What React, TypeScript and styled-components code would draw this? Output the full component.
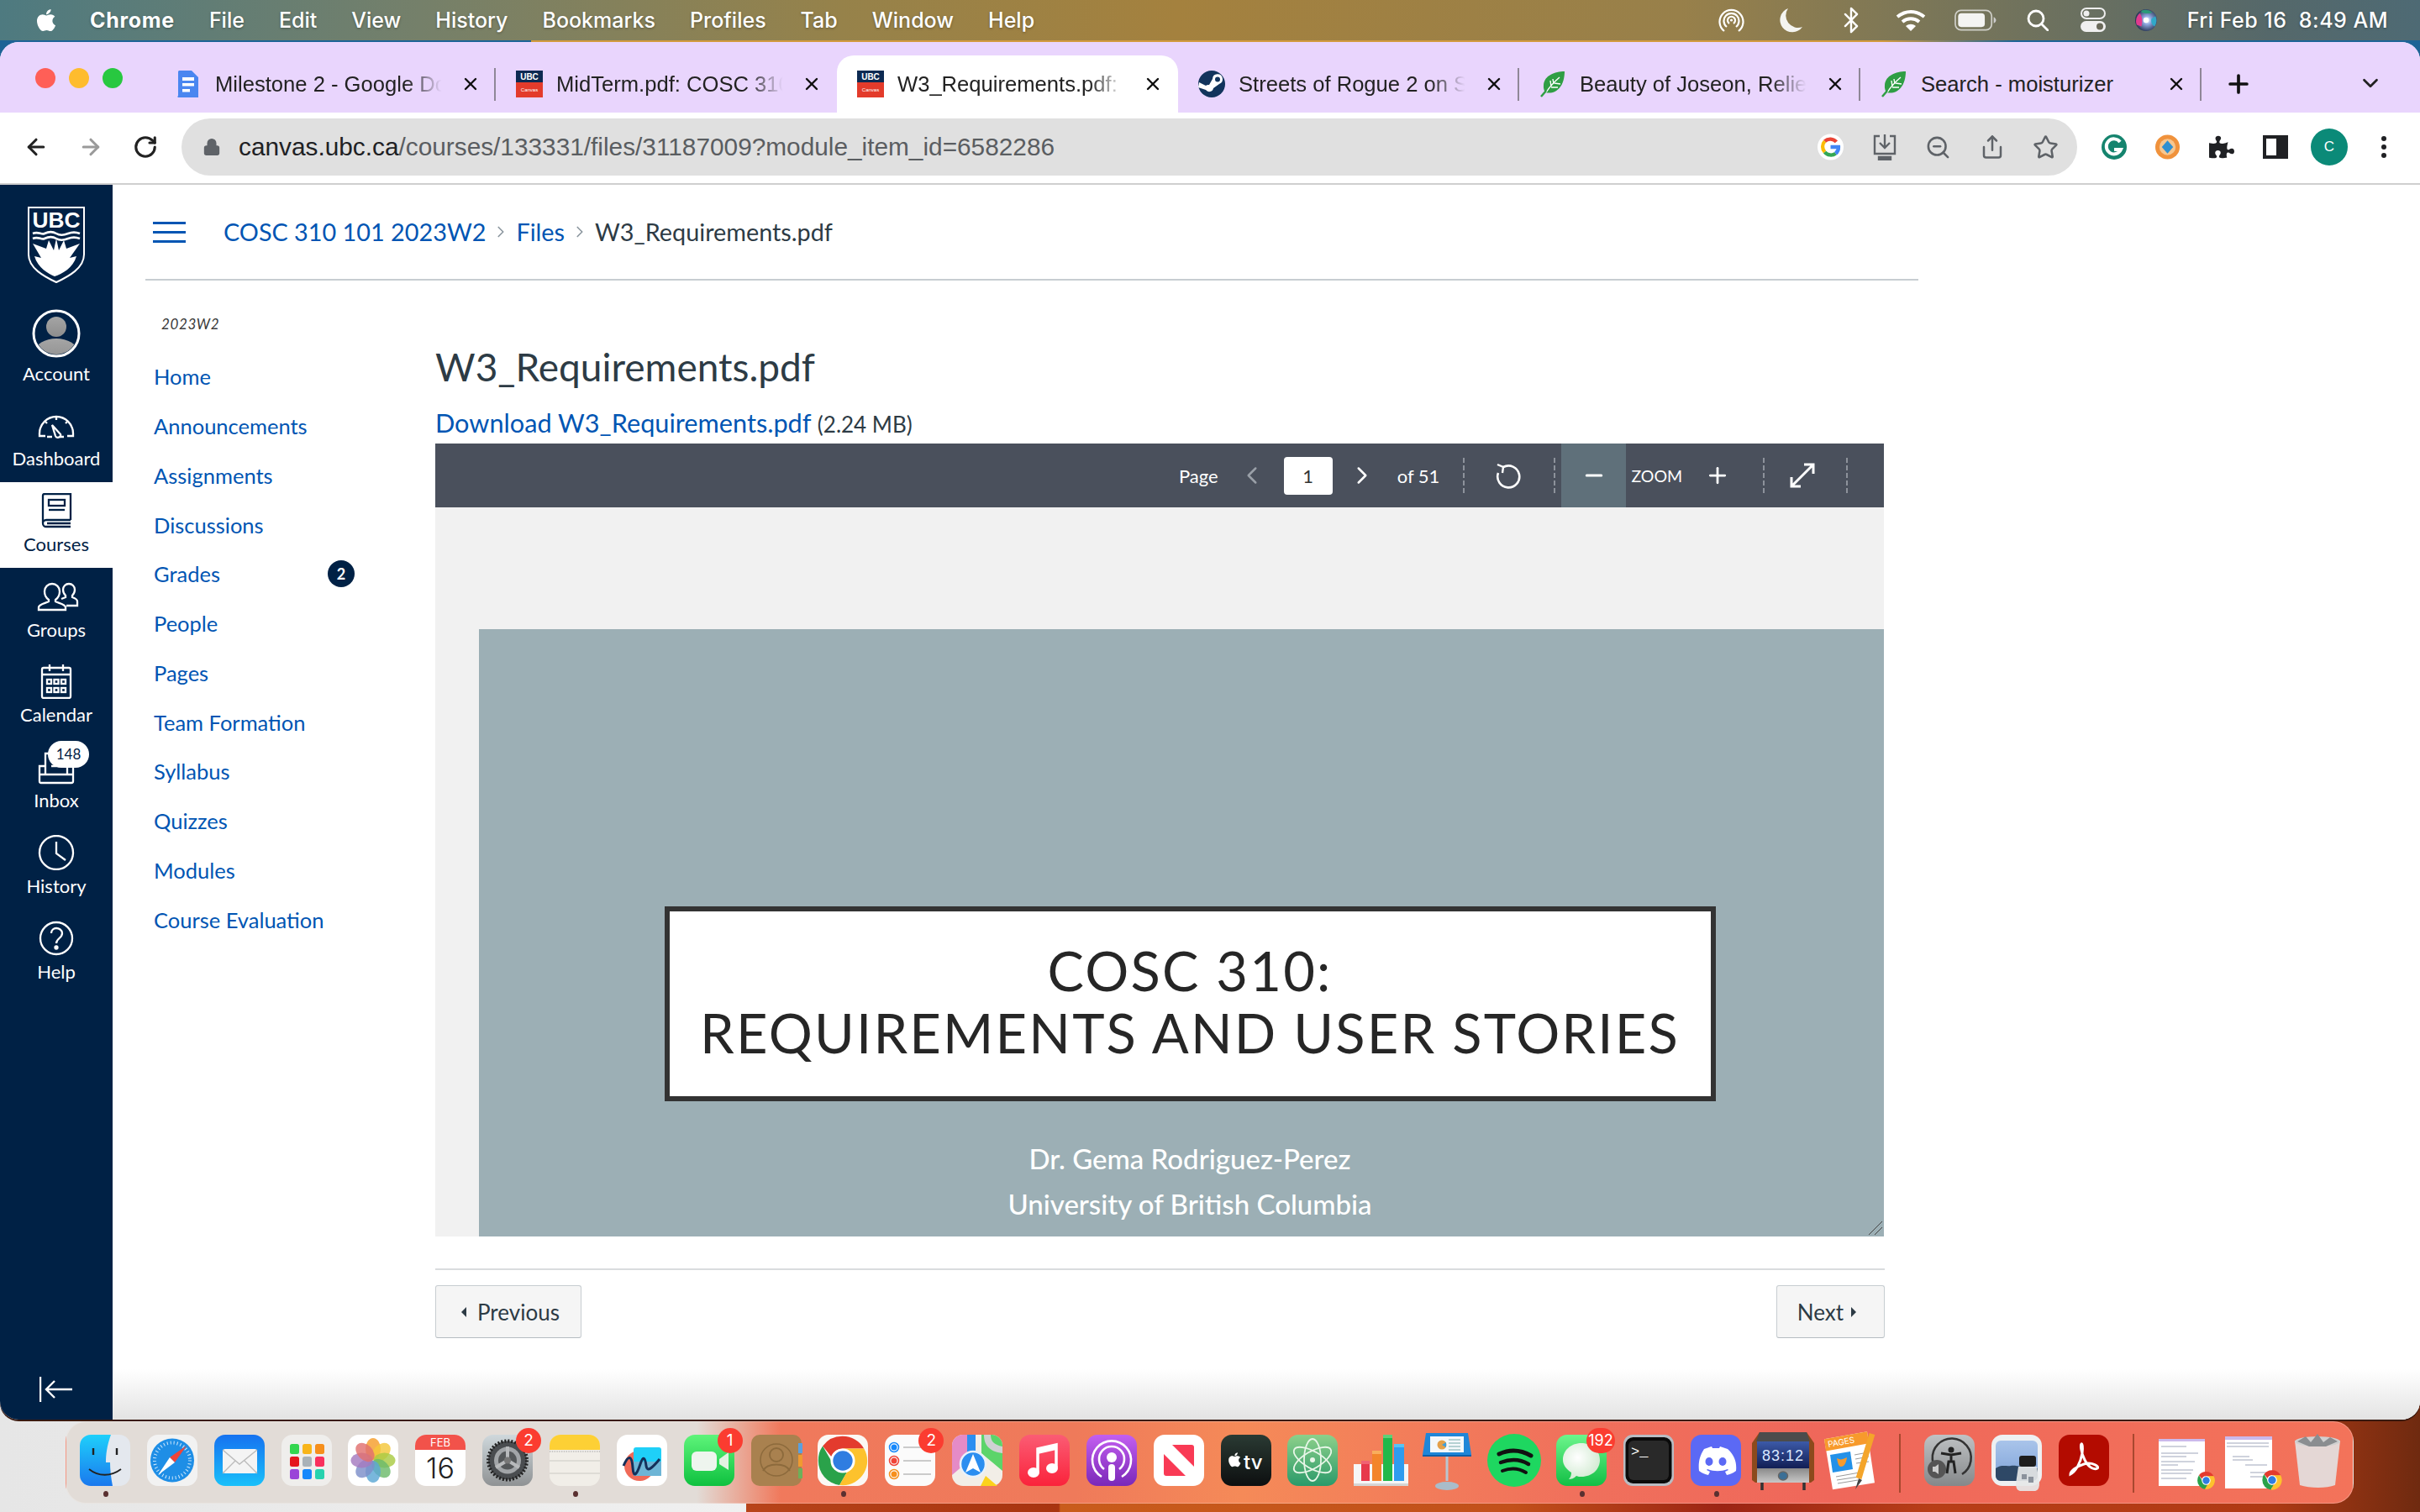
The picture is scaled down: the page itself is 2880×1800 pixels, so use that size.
import React from "react";
import styled, { createGlobalStyle } from "styled-components";
import { ArrowLeft, ArrowRight, RotateCw, Lock, ZoomOut, Share, Star, X, Plus, ChevronDown, ChevronLeft, ChevronRight, Minus, Bluetooth } from "lucide-react";
import { FaApple, FaPuzzlePiece } from "react-icons/fa";

const Global = createGlobalStyle`
  html, body { margin: 0; padding: 0; width: 2880px; height: 1800px; overflow: hidden; }
  #root { width: 2880px; height: 1800px; }
  * { box-sizing: border-box; }
`;

const Page = styled.div`
  width: 2880px; height: 1800px; display: flex; flex-direction: column; overflow: hidden;
  background:
    linear-gradient(90deg, #1d6396 0, #1d6396 632px, #d29a3e 632px, #d29a3e 2240px, #1d6396 2400px) top / 100% 120px no-repeat,
    linear-gradient(90deg, #e6e6e6 0, #f0f0f0 888px, #b8441a 888px, #a83410 1260px, #c95c1c 1262px, #c2501a 1800px, #9c2414 2050px, #b83e18 2300px, #b03a14 2700px, #6f2a10 2880px);
`;
const MenuBar = styled.header`
  height: 48px; margin-bottom: 2px; flex: none; display: flex; align-items: center; padding: 0 38px 0 40px; color: #fff;
  font: 500 25px Inter, "Liberation Sans", sans-serif; text-shadow: 0 1px 3px rgba(0,0,0,.35);
  background: linear-gradient(90deg, #4e7a80 0, #75806a 500px, #96824a 1000px, #a4813e 1400px, #98804a 2000px, #7a7658 2300px, #55686a 2700px, #4e6a74 2880px);
`;
const AppleMark = styled.span` width: 30px; margin-right: 37px; display: flex; font-size: 30px; `;
const MenuItems = styled.nav` display: flex; gap: 41px; `;
const MenuItem = styled.span<{ $bold?: boolean }>` font-weight: ${p => (p.$bold ? 700 : 500)}; letter-spacing: ${p => (p.$bold ? ".7px" : "0")}; `;
const StatusArea = styled.div` margin-left: auto; display: flex; align-items: center; gap: 33px; `;
const StatusSlot = styled.span<{ $w: number }>` width: ${p => p.$w}px; height: 40px; display: flex; align-items: center; justify-content: center; flex: none; `;
const Clock = styled.span` margin-left: 3px; letter-spacing: .5px; white-space: pre; `;

const Win = styled.div`
  height: 1640px; flex: none; border-radius: 22px; overflow: hidden; display: flex; flex-direction: column; background: #fff;
  box-shadow: 0 2px 0 #3a1a10;
`;
const TabStrip = styled.div` height: 84px; flex: none; background: #e9d5fd; display: flex; align-items: flex-end; `;
const Lights = styled.div` width: 184px; height: 84px; flex: none; padding: 31px 0 0 42px; display: flex; gap: 16px; `;
const Light = styled.i<{ $c: string }>` width: 24px; height: 24px; border-radius: 50%; background: ${p => p.$c}; `;
const Tab = styled.div<{ $active?: boolean; $sep?: boolean }>`
  width: 406px; height: 68px; flex: none; position: relative; display: flex; align-items: center; padding: 0 18px 0 24px; gap: 16px;
  border-radius: 20px 20px 0 0; background: ${p => (p.$active ? "#fff" : "transparent")};
  font: 400 25.6px "Liberation Sans", Arial, sans-serif; color: #222;
  &::after { content: ""; display: ${p => (p.$sep ? "block" : "none")}; position: absolute; right: 0; top: 15px; height: 39px; width: 2px; background: #8f8797; }
`;
const TabTitle = styled.span<{ $plain?: boolean }>`
  width: 278px; white-space: nowrap; overflow: hidden; flex: none;
  ${p => (p.$plain ? "" : "-webkit-mask-image: linear-gradient(90deg,#000 82%,transparent 97%); mask-image: linear-gradient(90deg,#000 82%,transparent 97%);")}
`;
const TabClose = styled.span` width: 28px; margin-left: -3px; display: flex; justify-content: center; color: #111; `;
const NewTab = styled.span` margin: 0 0 17px 27px; display: flex; color: #111; `;
const TabMenu = styled.span` margin-left: auto; margin-right: 44px; margin-bottom: 20px; display: flex; color: #222; `;
const Favicon = styled.svg` width: 32px; height: 32px; flex: none; `;

const Toolbar = styled.div`
  height: 86px; flex: none; display: flex; align-items: center; padding: 0 30px 2px 28px; background: #fff; border-bottom: 2px solid #cfcfcf;
`;
const NavButtons = styled.div` display: flex; gap: 35px; width: 188px; flex: none; color: #222; `;
const NavBtn = styled.span<{ $dim?: boolean }>` display: flex; width: 30px; color: ${p => (p.$dim ? "#9a9a9a" : "#222")}; `;
const Omnibox = styled.div`
  width: 2256px; height: 68px; flex: none; border-radius: 34px; background: #e0e0e0; display: flex; align-items: center; padding: 0 22px 0 25px;
`;
const Url = styled.span` margin-left: 21px; font: 400 29.8px "Liberation Sans", Arial, sans-serif; color: #5a5d61; white-space: nowrap; `;
const Host = styled.span` color: #202124; `;
const ActionRow = styled.div<{ $out?: boolean }>` display: flex; gap: 33px; align-items: center; color: #5f6368; margin-left: ${p => (p.$out ? "28px" : "auto")}; `;
const ActionSlot = styled.span` width: 31px; height: 44px; display: flex; align-items: center; justify-content: center; `;
const Avatar = styled.span` width: 44px; height: 44px; flex: none; border-radius: 50%; background: #0b8a78; color: #fff; font: 400 17px "Liberation Sans", sans-serif; display: flex; align-items: center; justify-content: center; margin: 0 -6px; `;

const Body = styled.div` flex: 1; min-height: 0; display: flex; `;
const Side = styled.aside` width: 134px; flex: none; background: #002145; display: flex; flex-direction: column; `;
const LogoBox = styled.div` height: 151px; flex: none; padding: 26px 0 0 33px; `;
const SideItem = styled.div<{ $on?: boolean }>`
  height: 101.7px; flex: none; display: flex; flex-direction: column; align-items: center; justify-content: flex-end; padding-bottom: 15px; position: relative;
  background: ${p => (p.$on ? "#fff" : "transparent")}; color: ${p => (p.$on ? "#002145" : "#fff")};
`;
const SideIcon = styled.svg<{ $h?: number }>` width: 60px; height: ${p => p.$h || 42}px; margin-bottom: 6px; flex: none; fill: none; stroke: currentColor; stroke-width: 2.3; `;
const SideLabel = styled.span` font: 400 22px/26px Lato, sans-serif; `;
const InboxBadge = styled.span` position: absolute; left: 57px; top: 3px; width: 49px; height: 32px; border-radius: 16px; background: #fff; color: #002145; font: 400 17px/32px Lato, sans-serif; text-align: center; `;
const Collapse = styled.svg` margin: auto 0 21px 47px; width: 40px; height: 30px; flex: none; fill: none; stroke: #fff; stroke-width: 2.4; `;

const Main = styled.main`
  flex: 1; min-width: 0; position: relative; overflow: hidden; background: #fff;
  &::after { content: ""; position: absolute; left: 0; right: 0; bottom: 0; height: 60px; background: linear-gradient(180deg, rgba(220,220,220,0), rgba(222,222,222,.85)); }
`;
const Crumbs = styled.div`
  width: 2110px; height: 114px; margin-left: 39px; display: flex; align-items: center; padding: 0 0 0 9px; border-bottom: 2px solid #c7cdd1;
  font: 400 28.8px Lato, sans-serif; color: #0055b3;
`;
const Burger = styled.span`
  width: 39px; height: 25px; margin-right: 45px; border-top: 3px solid #0055b3; border-bottom: 3px solid #0055b3; position: relative; display: block;
  &::after { content: ""; position: absolute; left: 0; right: 0; top: 8px; height: 3px; background: #0055b3; }
`;
const CrumbSep = styled.span` display: flex; margin: 0 7px; color: #8b969e; `;
const CrumbNow = styled.span` color: #2d3b45; `;
const Columns = styled.div` display: flex; `;
const CourseNav = styled.nav` width: 335px; margin-left: 49px; flex: none; padding-top: 42px; `;
const Term = styled.div` margin: 0 0 23px 9px; font: italic 400 17px/20px Lato, sans-serif; letter-spacing: .6px; color: #3a3a3a; `;
const NavRow = styled.a` height: 58.75px; width: 239px; display: flex; align-items: center; justify-content: space-between; font: 400 25.5px Lato, sans-serif; color: #0055b3; `;
const NavBadge = styled.span` width: 32px; height: 32px; border-radius: 50%; background: #002145; color: #fff; font: 700 18px/32px Lato, sans-serif; text-align: center; `;
const Content = styled.section` width: 1725px; flex: none; padding-top: 78px; `;
const Title = styled.h1` margin: 0 0 26px; font: 400 46px/50px Lato, sans-serif; color: #2d3b45; `;
const DownloadRow = styled.div` height: 40px; font: 400 30.7px/32px Lato, sans-serif; color: #0055b3; `;
const Size = styled.small` font-size: 26px; color: #2d3b45; `;
const PdfBar = styled.div`
  height: 76px; width: 1724px; background: #4a505c; display: flex; align-items: center; color: #fff; padding-left: 885px;
  font: 400 22px Lato, sans-serif;
`;
const PdfText = styled.span<{ $ml?: number; $small?: boolean }>` margin-left: ${p => p.$ml || 0}px; font-size: ${p => (p.$small ? "19.5px" : "22px")}; white-space: nowrap; `;
const PdfInput = styled.span` width: 58px; height: 45px; margin-left: 21px; border-radius: 4px; background: #fff; color: #333; font-size: 22px; display: flex; align-items: center; justify-content: center; `;
const PdfBtn = styled.span<{ $on?: boolean; $dim?: boolean; $ml?: number }>`
  display: flex; align-items: center; justify-content: center; height: 76px; flex: none; margin-left: ${p => p.$ml || 0}px;
  color: ${p => (p.$dim ? "#9aa0a8" : "#fff")}; background: ${p => (p.$on ? "#5f707a" : "transparent")}; width: ${p => (p.$on ? "77px" : "auto")};
`;
const PdfSep = styled.i<{ $ml: number }>` width: 0; height: 42px; border-left: 2px dashed #8d929b; margin-left: ${p => p.$ml}px; flex: none; `;
const Viewer = styled.div` height: 868px; width: 1724px; background: #f1f1f1; padding: 145px 0 0 52px; overflow: hidden; position: relative; `;
const Slide = styled.div` width: 1692px; height: 800px; background: #9cafb5; padding-top: 330px; display: flex; flex-direction: column; align-items: center; `;
const SlideBox = styled.div`
  width: 1251px; height: 232px; padding-bottom: 6px; background: #fff; border: 6px solid #333; display: flex; flex-direction: column; align-items: center; justify-content: center;
  font: 400 65px/74px Lato, sans-serif; color: #262626; letter-spacing: 2.2px; white-space: nowrap;
`;
const Byline = styled.div` margin-top: 41px; font: 500 33px/54px Lato, sans-serif; color: #fff; text-align: center; `;
const Grip = styled.svg` position: absolute; right: 1px; bottom: 1px; width: 20px; height: 20px; stroke: #444; fill: none; `;
const Pager = styled.div` width: 1725px; margin-top: 38px; padding-top: 18px; border-top: 2px solid #d9dcde; display: flex; justify-content: space-between; `;
const PagerBtn = styled.span<{ $next?: boolean }>`
  height: 63px; display: flex; align-items: center; gap: ${p => (p.$next ? "9px" : "13px")}; padding: ${p => (p.$next ? "0 33px 0 24px" : "0 25px 0 30px")};
  background: #f5f5f5; border: 1px solid #c7cdd1; border-bottom-color: #b5bcc1; border-radius: 3px;
  font: 400 26px Lato, sans-serif; color: #2d3b45;
`;
const Caret = styled.i<{ $r?: boolean }>` width: 0; height: 0; border-top: 6px solid transparent; border-bottom: 6px solid transparent; ${p => (p.$r ? "border-left: 6px solid #2d3b45;" : "border-right: 6px solid #2d3b45;")} `;

const Dock = styled.footer`
  width: 2723px; height: 98px; margin: 2px 0 0 78px; flex: none; padding: 15px 0 0 16px; display: flex; gap: 19.87px; align-items: flex-start;
  border-radius: 24px; border: 1px solid rgba(255,255,255,.25);
  background: linear-gradient(90deg, #e2dcd7 0, #e2dcd7 750px, #f0795c 850px, #ef7a5a 1200px, #f58a58 1400px, #f0705c 1800px, #ef675a 2100px, #f3735a 2723px);
`;
const Slot = styled.div` width: 60px; height: 61px; flex: none; position: relative; `;
const DockArt = styled.svg` width: 60px; height: 61px; display: block; overflow: visible; `;
const DockBadge = styled.span<{ $wide?: boolean }>`
  position: absolute; top: -8px; right: -10px; min-width: ${p => (p.$wide ? "34px" : "30px")}; height: 30px; border-radius: 15px; background: #fb3c30; color: #fff;
  font: 400 ${p => (p.$wide ? "18px" : "19px")}/30px Inter, sans-serif; text-align: center;
`;
const RunDot = styled.i` position: absolute; left: 28px; top: 67px; width: 6px; height: 7px; border-radius: 50%; background: #5a3030; `;
const DockRule = styled.div` width: 19px; height: 70px; flex: none; margin-top: -1px; display: flex; justify-content: center; &::before { content: ""; width: 2px; background: #a8482f; } `;

const Docs = () => (<Favicon viewBox="0 0 32 32"><path d="M5 0h15l8 8v24H5a1 1 0 0 1-1-2V2a2 2 0 0 1 1-2z" fill="#4a86f0"/><rect x="9" y="8" width="14" height="4" fill="#fff"/><rect x="9" y="15" width="14" height="3.5" fill="#fff"/><rect x="9" y="22" width="9" height="3.5" fill="#fff"/></Favicon>);
const UbcFav = () => (<Favicon viewBox="0 0 32 32"><rect width="32" height="14" fill="#0d2a52"/><rect y="14" width="32" height="18" fill="#e33b2b"/><text x="16" y="11" textAnchor="middle" fill="#fff" fontSize="10" fontWeight="700" fontFamily="Liberation Sans">UBC</text><text x="16" y="25" textAnchor="middle" fill="#fff" fontSize="6" fontFamily="Liberation Sans">Canvas</text></Favicon>);
const Steam = () => (<Favicon viewBox="0 0 32 32"><circle cx="16" cy="16" r="16" fill="#12345c"/><path d="M0 20l9 3a5 5 0 0 0 9-2l7-5a6 6 0 1 0-8-6l-4 7a5 5 0 0 0-4 1L1 14z" fill="#fff"/><circle cx="23" cy="10.5" r="3" fill="#12345c"/></Favicon>);
const Leaf = () => (<Favicon viewBox="0 0 32 32"><path d="M30 1C18 1 6 6 5 17c-.4 4 .6 7 2 9 12 3 23-6 23-25z" fill="#2f9e44"/><path d="M8 26C13 18 17 14 24 8M14 19l-1-7M17 16l-1-6M14 20l8 0M18 15l7 1" stroke="#fff" strokeWidth="1.4" fill="none"/><path d="M2 31l6-7" stroke="#2f9e44" strokeWidth="2.5"/></Favicon>);
const GoogleG = () => (<svg width="36" height="36" viewBox="0 0 36 36"><circle cx="18" cy="18" r="18" fill="#fff"/><g fill="none" strokeWidth="5"><path d="M26 11a11 11 0 0 0-16-1" stroke="#ea4335"/><path d="M10 10a11 11 0 0 0 0 15" stroke="#fbbc05"/><path d="M10 25a11 11 0 0 0 15 2" stroke="#34a853"/><path d="M25 27a11 11 0 0 0 4-9H18" stroke="#4285f4"/></g></svg>);
const ChromeLogo = ({ x = 0, y = 0, s = 48 }: { x?: number; y?: number; s?: number }) => (
  <svg x={x} y={y} width={s} height={s} viewBox="0 0 48 48" overflow="visible">
    <path d="M24 4a20 20 0 0 1 17.3 10H24a10 10 0 0 0-9.4 6.6L7.6 12A20 20 0 0 1 24 4z" fill="#e33b2e"/>
    <path d="M4 24a20 20 0 0 1 3.6-12l8.7 15a10 10 0 0 0 11 6.5l-6 10.3A20 20 0 0 1 4 24z" fill="#2aa24a"/>
    <path d="M24 14h17.3A20 20 0 0 1 24 44l-2.7-.2 8.7-15A10 10 0 0 0 24 14z" fill="#fdc22d"/>
    <circle cx="24" cy="24" r="10" fill="#fff"/><circle cx="24" cy="24" r="8" fill="#2f7de1"/>
  </svg>
);

type SQ = { f: string; r?: number };
const Sq = ({ f, r = 13 }: SQ) => <rect width="60" height="61" rx={r} fill={f} />;

const art: Record<string, React.ReactNode> = {
  finder: (<><defs><linearGradient id="fd" x1="0" y1="0" x2="0" y2="1"><stop offset="0" stopColor="#1fd0fb"/><stop offset="1" stopColor="#1a78ee"/></linearGradient></defs><Sq f="#e4e8ee"/><path d="M13 0h24c-5 14-6 24-6 33h5c0 8 1 18 3 28H13A13 13 0 0 1 0 48V13A13 13 0 0 1 13 0z" fill="url(#fd)"/><path d="M16 16v8M44 16v8" stroke="#222" strokeWidth="2.4"/><path d="M11 41c11 9 26 9 38 0" stroke="#222" strokeWidth="1.8" fill="none"/></>),
  safari: (<><Sq f="#f2f2f2"/><circle cx="30" cy="30.5" r="26" fill="#1e8ee6"/><circle cx="30" cy="30.5" r="21" fill="none" stroke="#cfe8fb" strokeWidth="4" strokeDasharray="1 3"/><path d="M47 13L27 27l6 6z" fill="#f04438"/><path d="M13 48l14-21 6 6z" fill="#fff"/></>),
  mail: (<><defs><linearGradient id="ml" x1="0" y1="0" x2="0" y2="1"><stop offset="0" stopColor="#1672f0"/><stop offset="1" stopColor="#19c0fa"/></linearGradient></defs><Sq f="url(#ml)"/><rect x="10" y="17" width="41" height="29" rx="3" fill="#f4f4f4"/><path d="M10 18l20 17 21-17M10 46l15-15M51 46L36 31" fill="none" stroke="#bbb" strokeWidth="1.4"/></>),
  launch: (<><Sq f="#efeeec"/>{[["#33d64f","#f8b51a","#f68f1c"],["#e5161d","#a9b2b8","#f9305d"],["#9a44d8","#1688fb","#26d2ae"]].map((row,i)=>row.map((c,j)=><rect key={i+"-"+j} x={10+j*15} y={11+i*15} width="11" height="12" rx="2.5" fill={c}/>))}</>),
  photos: (<><Sq f="#fff"/>{["#f59e2b","#f4c73a","#a9cb43","#6dbb6b","#5ba7d4","#7d8fc9","#a57ac0","#e0706f"].map((c,i)=><ellipse key={c} cx="30" cy="17" rx="9" ry="13" fill={c} opacity=".82" transform={`rotate(${i*45} 30 30.5)`}/>)}</>),
  calendar: (<><Sq f="#fff"/><path d="M13 0h34a13 13 0 0 1 13 13v5H0v-5A13 13 0 0 1 13 0z" fill="#f2524a"/><text x="30" y="14" textAnchor="middle" fontSize="13" fill="#fff" fontFamily="Inter">FEB</text><text x="30" y="52" textAnchor="middle" fontSize="34" fill="#222" fontFamily="Inter" fontWeight="300">16</text></>),
  prefs: (<><defs><linearGradient id="pf" x1="0" y1="0" x2="0" y2="1"><stop offset="0" stopColor="#cfd8dc"/><stop offset="1" stopColor="#8f9294"/></linearGradient></defs><Sq f="url(#pf)"/><circle cx="30" cy="30.5" r="23" fill="#4a4d50"/><circle cx="30" cy="30.5" r="23" fill="none" stroke="#222" strokeWidth="4" strokeDasharray="2 2"/><circle cx="30" cy="30.5" r="16" fill="#a2a5a8"/><circle cx="30" cy="30.5" r="11" fill="#55585a"/><path d="M30 30.5V14M30 30.5L44 39M30 30.5L16 39" stroke="#b8babc" strokeWidth="4"/><circle cx="30" cy="30.5" r="4" fill="#777"/></>),
  notes: (<><Sq f="#f1eee8"/><path d="M13 0h34a13 13 0 0 1 13 13v5H0v-5A13 13 0 0 1 13 0z" fill="#fdd035"/><path d="M0 20h60" stroke="#bbb" strokeWidth="1.4" strokeDasharray="1.4 1.4"/><path d="M0 31h60M0 46h60" stroke="#d8d6d0" strokeWidth="1.5"/></>),
  freeform: (<><Sq f="#fff"/><circle cx="27" cy="37" r="18" fill="#f06a58"/><rect x="20" y="15" width="33" height="34" rx="3" fill="#1fd0f8"/><rect x="20" y="32" width="33" height="17" fill="#6db5d6"/><path d="M8 37c6-14 10-12 11 2s5 8 9-4 6-6 7 2 7 3 16-8" fill="none" stroke="#14305a" strokeWidth="3"/></>),
  facetime: (<><defs><linearGradient id="ft" x1="0" y1="0" x2="0" y2="1"><stop offset="0" stopColor="#5ef47a"/><stop offset="1" stopColor="#0ec13f"/></linearGradient></defs><Sq f="url(#ft)"/><rect x="9" y="20" width="30" height="23" rx="6" fill="#eef5ee"/><path d="M42 29l11-8v21l-11-7z" fill="#e2f2e2"/></>),
  contacts: (<><rect width="60" height="61" rx="10" fill="#a9814f"/><rect x="56" y="10" width="5" height="12" fill="#5aa0e0"/><rect x="56" y="24" width="5" height="14" fill="#f09a30"/><rect x="56" y="40" width="5" height="12" fill="#6db05a"/><circle cx="30" cy="30" r="19" fill="none" stroke="#8c6a3c" strokeWidth="1.5"/><circle cx="30" cy="24" r="8" fill="none" stroke="#8c6a3c" strokeWidth="1.8"/><path d="M14 43c5-10 27-10 32 0" fill="none" stroke="#8c6a3c" strokeWidth="1.8"/></>),
  chrome: (<><Sq f="#fbf8f4"/><ChromeLogo x={-5} y={-4} s={70}/></>),
  remind: (<><Sq f="#fbfbfb"/>{[["#1688fb",15],["#f04438",31],["#f68f1c",47]].map(([c,y])=>(<g key={c as string}><circle cx="11" cy={y as number} r="5.5" fill="none" stroke={c as string} strokeWidth="1.5"/><circle cx="11" cy={y as number} r="3.5" fill={c as string}/><path d={`M22 ${y}h33`} stroke="#bbb" strokeWidth="1.5"/></g>))}</>),
  maps: (<><Sq f="#f2eee7"/><path d="M0 13A13 13 0 0 1 13 0h8v30L0 48z" fill="#e58bc6"/><path d="M35 0h12a13 13 0 0 1 13 13v30L35 22z" fill="#5cd46a"/><path d="M18 0h10v28H18z" fill="#2b8ef0"/><path d="M38 0c0 12 6 20 22 22v-8C50 12 46 8 46 0z" fill="#cfd1d2"/><path d="M34 61l6-12 14 12z" fill="#fcd21c"/><circle cx="25" cy="35" r="15" fill="#2b8ef0" stroke="#e8f2fb" strokeWidth="2.5"/><path d="M25 23l9 22-9-5-9 5z" fill="#fff"/></>),
  music: (<><defs><linearGradient id="mu" x1="0" y1="0" x2="0" y2="1"><stop offset="0" stopColor="#fb5c74"/><stop offset="1" stopColor="#fa233b"/></linearGradient></defs><Sq f="url(#mu)"/><path d="M22 44V17l22-5v27" fill="none" stroke="#fff" strokeWidth="3.5"/><ellipse cx="17" cy="45" rx="7" ry="6" fill="#fff"/><ellipse cx="39" cy="40" rx="7" ry="6" fill="#fff"/><path d="M22 17l22-5v6l-22 5z" fill="#fff"/></>),
  podcast: (<><defs><linearGradient id="pc" x1="0" y1="0" x2="0" y2="1"><stop offset="0" stopColor="#c35ff0"/><stop offset="1" stopColor="#7a28b8"/></linearGradient></defs><Sq f="url(#pc)"/><g fill="none" stroke="#fff" strokeWidth="2.6"><path d="M18 50a23 23 0 1 1 24 0"/><path d="M21 41a15 15 0 1 1 18 0"/></g><circle cx="30" cy="27" r="6" fill="#fff"/><rect x="26" y="35" width="8" height="20" rx="4" fill="#fff"/></>),
  news: (<><Sq f="#fff"/><rect x="12" y="12" width="36" height="37" rx="3" fill="#f93a55"/><path d="M12 12h10l26 26v11H38L12 23z" fill="#fff"/></>),
  tv: (<><defs><linearGradient id="tv" x1="0" y1="0" x2="0" y2="1"><stop offset="0" stopColor="#2a3a33"/><stop offset="1" stopColor="#0d0f10"/></linearGradient></defs><Sq f="url(#tv)"/><g transform="translate(9 20) scale(.038)"><path fill="#fff" d="M318.7 268.7c-.2-36.7 16.4-64.4 50-84.8-18.8-26.9-47.2-41.7-84.7-44.6-35.5-2.8-74.3 20.7-88.5 20.7-15 0-49.4-19.7-76.4-19.7C63.3 141.2 4 184.8 4 273.5q0 39.3 14.4 81.2c12.8 36.7 59 126.7 107.2 125.2 25.2-.6 43-17.9 75.8-17.9 31.8 0 48.3 17.9 76.4 17.9 48.6-.7 90.4-82.5 102.6-119.3-65.2-30.7-61.7-90-61.7-91.9zm-56.6-164.2c27.3-32.4 24.8-61.9 24-72.5-24.1 1.4-52 16.4-67.9 34.9-17.5 19.8-27.8 44.3-25.6 71.9 26.1 2 49.9-11.4 69.5-34.3z"/></g><text x="27" y="41" fontSize="24" fill="#fff" fontFamily="Inter" fontWeight="500">tv</text></>),
  atom: (<><defs><linearGradient id="at" x1="0" y1="0" x2="0" y2="1"><stop offset="0" stopColor="#8dd08a"/><stop offset="1" stopColor="#2a9a6a"/></linearGradient></defs><Sq f="url(#at)"/><g fill="none" stroke="#e8f6e8" strokeWidth="1.8"><ellipse cx="30" cy="30" rx="25" ry="10" transform="rotate(30 30 30)"/><ellipse cx="30" cy="30" rx="25" ry="10" transform="rotate(-30 30 30)"/><ellipse cx="30" cy="30" rx="25" ry="10" transform="rotate(90 30 30)"/></g><circle cx="30" cy="30" r="3" fill="#e8f6e8"/></>),
  numbers: (<><path d="M-1 35h65v26H-1z" fill="#f6f6f6"/><path d="M-1 58h65v3H-1z" fill="#d5d5d5"/><rect x="8" y="34" width="10" height="21" fill="#e7394b"/><rect x="8" y="31" width="10" height="4" fill="#f06272"/><rect x="21" y="22" width="11" height="33" fill="#f3852b"/><rect x="21" y="19" width="11" height="4" fill="#f9ae5c"/><rect x="34" y="3" width="11" height="52" fill="#21b84a"/><rect x="34" y="0" width="11" height="4" fill="#60d078"/><rect x="47" y="14" width="12" height="41" fill="#2f9cee"/><rect x="47" y="11" width="12" height="4" fill="#56c4f4"/></>),
  keynote: (<><path d="M5-2h50l4 26H1z" fill="#1f86d8"/><rect x="10" y="2" width="40" height="19" fill="#f4f8fb"/><path d="M1 24h58v2H1z" fill="#0f5fa8"/><circle cx="24" cy="12" r="5.5" fill="#e4a04a"/><path d="M24 12l5-3v6z" fill="#3a9fe0"/><path d="M32 6h14M32 10h14M32 14h14M32 18h14" stroke="#7aa" strokeWidth="1"/><rect x="28.5" y="26" width="3" height="29" fill="#b9c6d0"/><ellipse cx="30" cy="61" rx="14" ry="5" fill="#a9bcca"/></>),
  spotify: (<><ellipse cx="30" cy="30.5" rx="32" ry="31.5" fill="#1ed760"/><g fill="none" stroke="#111" strokeLinecap="round"><path d="M12 23c13-6 26-5 38 2" strokeWidth="5"/><path d="M14 33c11-4 23-4 33 2" strokeWidth="4.5"/><path d="M16 43c10-4 20-3 28 2" strokeWidth="4"/></g></>),
  messages: (<><defs><linearGradient id="ms" x1="0" y1="0" x2="0" y2="1"><stop offset="0" stopColor="#6cf58c"/><stop offset="1" stopColor="#12bf45"/></linearGradient><radialGradient id="mb" cx=".4" cy=".4" r=".7"><stop offset="0" stopColor="#fff"/><stop offset="1" stopColor="#cde8cd"/></radialGradient></defs><Sq f="url(#ms)"/><path d="M30 10c13 0 22 9 22 20S43 50 30 50c-2 0-4 0-6-1-3 3-6 4-9 4 2-2 3-5 3-8-6-4-10-9-10-15 0-11 9-20 22-20z" fill="url(#mb)"/></>),
  terminal: (<><rect width="60" height="61" rx="11" fill="#b8bcc2"/><rect x="2.5" y="3" width="55" height="55" rx="9" fill="#0a0a0a"/><rect x="6" y="7" width="48" height="47" rx="6" fill="#292929"/><text x="9" y="25" fontSize="17" fill="#fff" fontFamily="Liberation Mono">&gt;_</text></>),
  discord: (<><Sq f="#5b69f5"/><path d="M44 17c-3-1-6-2-9-3l-1 2c-3 0-6 0-8 0l-1-2c-3 1-6 2-9 3-6 9-7 18-6 26 4 3 7 4 11 5l2-4-4-2 1-1c8 3 16 3 24 0l1 1-4 2 2 4c4-1 7-2 11-5 1-9-1-18-10-26z" fill="#fff"/><ellipse cx="22" cy="32" rx="4.5" ry="5" fill="#5b69f5"/><ellipse cx="38" cy="32" rx="4.5" ry="5" fill="#5b69f5"/></>),
  clock: (<><defs><linearGradient id="cs" x1="0" y1="0" x2="0" y2="1"><stop offset="0" stopColor="#3c5aa8"/><stop offset="1" stopColor="#101c52"/></linearGradient><linearGradient id="cb" x1="0" y1="0" x2="0" y2="1"><stop offset="0" stopColor="#8a8a8a"/><stop offset="1" stopColor="#c8c8c8"/></linearGradient></defs><path d="M-6 10L3-3h56l9 13v44l-4 3H-2l-4-3z" fill="#8c4a1c"/><path d="M3-3h56l4 11H-1z" fill="#4c4c4c"/><rect x="0" y="8" width="62" height="33" fill="url(#cs)"/><rect x="0" y="40" width="62" height="17" fill="url(#cb)"/><text x="31" y="31" textAnchor="middle" fontSize="18" letterSpacing="1" fill="#dbe7ff" fontFamily="Liberation Sans">83:12</text><ellipse cx="31" cy="49" rx="5.5" ry="5" fill="#3b6f96" stroke="#666" strokeWidth="1.5"/><path d="M6 57v9M56 57v9" stroke="#333" strokeWidth="3.5"/></>),
  pages: (<><path d="M0 5.3L51-3.7l9 61L10 65.3z" fill="#fff"/><path d="M0 5.3L51-3.7l2.2 14L2 19.5z" fill="#f79a2c"/><text x="5" y="15" fontSize="10" fill="#fff" fontFamily="Inter" transform="rotate(-10 5 15)">PAGES</text><path d="M7 24l24-4 3 21-24 4z" fill="#2391e8"/><path d="M15 28c4 2 6 2 12-1-1 8-4 11-7 11s-4-5-5-10z" fill="#f59a2c"/><path d="M14 50l28-5M15 54l26-4M16 58l24-4M36 24l16-3M37 29l16-3M38 34l15-2" stroke="#9a9a9a" strokeWidth="1"/><path d="M57-1L41 52" stroke="#f4a52a" strokeWidth="7"/><path d="M41 52l-4 13 8-11" fill="#444"/></>),
  access: (<><defs><linearGradient id="ac" x1="0" y1="0" x2="0" y2="1"><stop offset="0" stopColor="#bfc2c4"/><stop offset="1" stopColor="#85888a"/></linearGradient></defs><Sq f="url(#ac)"/><path d="M19 46a23 23 0 1 1 26 1" fill="none" stroke="#333" strokeWidth="2.6"/><circle cx="32" cy="18" r="3.5" fill="#222"/><path d="M20 22l12 2 12-2M32 24v8M27 46l2-14h6l2 14" fill="none" stroke="#222" strokeWidth="3"/><circle cx="15" cy="41" r="11" fill="#555"/><path d="M10 38h3l4-3v12l-4-3h-3z" fill="#ccc"/></>),
  preview: (<><defs><linearGradient id="pv" x1="0" y1="0" x2="0" y2="1"><stop offset="0" stopColor="#a9c4ea"/><stop offset="1" stopColor="#7ea2d8"/></linearGradient></defs><Sq f="#eef0f2"/><rect x="5" y="7" width="50" height="48" rx="6" fill="url(#pv)"/><path d="M5 40c7-5 12-2 18-3s14 2 32 3v9a6 6 0 0 1-6 6H11a6 6 0 0 1-6-6z" fill="#2e4866"/><path d="M32 38h22l3 20c0 7-3 9-6 9H35c-3 0-6-2-6-9z" fill="#e6e8e8" opacity=".92"/><rect x="33" y="25" width="20" height="13" rx="3" fill="#1d1d1d"/><path d="M36 47h6v6h-6zM44 50h6v7h-6z" fill="#8b929c"/></>),
  acrobat: (<><Sq f="#b30b00"/><path d="M14 47c6-3 12-13 14-25 1-7 0-12-1-11s-1 9 4 19 12 12 15 10-6-8-16-5-16 9-16 12z" fill="none" stroke="#fff" strokeWidth="3"/></>),
  doc1: (<><rect x="0" y="5" width="55" height="56" fill="#fff"/><rect y="5" width="55" height="3" fill="#cbb9ec"/><path d="M3 14h30M3 22h44M3 26h30M3 32h40M3 36h20M3 42h38M3 46h36M3 52h30" stroke="#9fa6ba" strokeWidth="1"/><ChromeLogo x={44} y={42} s={25}/></>),
  doc2: (<><rect x="0" y="2" width="56" height="62" fill="#fff"/><rect y="2" width="56" height="4" fill="#cbb9ec"/><path d="M2 10h50M2 14h50M9 26h20M9 30h24M24 36h26M30 45h20M30 50h16" stroke="#9fa6ba" strokeWidth="1"/><ChromeLogo x={42} y={40} s={28}/></>),
  trash: (<><path d="M3 7h54l-6 53c-10 4-30 4-42 0z" fill="#e2e2e2" opacity=".9"/><ellipse cx="30" cy="8" rx="27" ry="6" fill="#d0d0d0"/><path d="M6 8l10-6 6 7 8-10 7 10 8-6 9 5-14 6H20z" fill="#8a8d90"/></>),
};

const dockItems: ({ k: string; n?: string; dot?: boolean } | "rule")[] = [
  { k: "finder", dot: true }, { k: "safari" }, { k: "mail" }, { k: "launch" }, { k: "photos" }, { k: "calendar" }, { k: "prefs", n: "2" },
  { k: "notes", dot: true }, { k: "freeform" }, { k: "facetime", n: "1" }, { k: "contacts" }, { k: "chrome", dot: true }, { k: "remind", n: "2" },
  { k: "maps" }, { k: "music" }, { k: "podcast" }, { k: "news" }, { k: "tv" }, { k: "atom" }, { k: "numbers" }, { k: "keynote" }, { k: "spotify" },
  { k: "messages", n: "192", dot: true }, { k: "terminal" }, { k: "discord", dot: true }, { k: "clock" }, { k: "pages" }, "rule",
  { k: "access" }, { k: "preview" }, { k: "acrobat" }, "rule", { k: "doc1" }, { k: "doc2" }, { k: "trash" },
];

const tabs = [
  { t: "Milestone 2 - Google Docs", f: <Docs />, sep: true },
  { t: "MidTerm.pdf: COSC 310 101", f: <UbcFav /> },
  { t: "W3_Requirements.pdf: COSC", f: <UbcFav />, active: true },
  { t: "Streets of Rogue 2 on Steam", f: <Steam />, sep: true },
  { t: "Beauty of Joseon, Relief Sun", f: <Leaf />, sep: true },
  { t: "Search - moisturizer", f: <Leaf />, sep: true, plain: true },
];
const menus = ["File", "Edit", "View", "History", "Bookmarks", "Profiles", "Tab", "Window", "Help"];
const links = ["Home", "Announcements", "Assignments", "Discussions", "Grades", "People", "Pages", "Team Formation", "Syllabus", "Quizzes", "Modules", "Course Evaluation"];

export default function App() {
  return (
    <Page>
      <Global />
      <MenuBar>
        <AppleMark><FaApple /></AppleMark>
        <MenuItems>
          <MenuItem $bold>Chrome</MenuItem>
          {menus.map(m => <MenuItem key={m}>{m}</MenuItem>)}
        </MenuItems>
        <StatusArea>
          <StatusSlot $w={38}><svg width="31" height="31" viewBox="0 0 31 31" fill="none" stroke="#fff" strokeWidth="2.2"><path d="M7 28a14 14 0 1 1 17 0M10 23a9 9 0 1 1 11 0M13 19a4.5 4.5 0 1 1 5 0"/><circle cx="15.5" cy="15" r="1.6" fill="#fff" stroke="none"/></svg></StatusSlot>
          <StatusSlot $w={38}><svg width="28" height="30" viewBox="0 0 28 30" fill="#f4f4f0"><path d="M10 1A14.5 14.5 0 0 0 27 23 14.6 14.6 0 1 1 10 1z"/></svg></StatusSlot>
          <StatusSlot $w={38}><Bluetooth size={34} strokeWidth={1.7} color="#fff"/></StatusSlot>
          <StatusSlot $w={38}><svg width="36" height="27" viewBox="0 0 36 27" fill="none" stroke="#fff" strokeWidth="4"><path d="M2 9c10-8 22-8 32 0M8 15c6-5 14-5 20 0"/><path d="M12 20c4-3 8-3 12 0l-6 6z" fill="#fff" stroke="none"/></svg></StatusSlot>
          <StatusSlot $w={50}><svg width="52" height="26" viewBox="0 0 52 26"><rect x="1" y="1" width="45" height="24" rx="7" fill="none" stroke="#cfcfc8" strokeWidth="1.8"/><rect x="4.5" y="4.5" width="33" height="17" rx="4" fill="#f4f4f2"/><path d="M48.5 9c2 1 3 3 3 4s-1 3-3 4z" fill="#ccc"/></svg></StatusSlot>
          <StatusSlot $w={32}><svg width="26" height="26" viewBox="0 0 26 26" fill="none" stroke="#fff" strokeWidth="2.8"><circle cx="11" cy="11" r="9"/><path d="M18 18l7 7" strokeLinecap="round"/></svg></StatusSlot>
          <StatusSlot $w={34}><svg width="30" height="30" viewBox="0 0 30 30"><rect x="1" y="1" width="28" height="12" rx="6" fill="none" stroke="#eee" strokeWidth="2"/><circle cx="7" cy="7" r="3.5" fill="#eee"/><rect y="16" width="30" height="13" rx="6.5" fill="#f0f0f0"/><circle cx="23" cy="22.5" r="4" fill="#6a6a5a"/></svg></StatusSlot>
          <StatusSlot $w={26}><svg width="28" height="28" viewBox="0 0 28 28"><defs><radialGradient id="sr" cx=".55" cy=".5" r=".55"><stop offset="0" stopColor="#fff"/><stop offset=".35" stopColor="#8fa8e0"/><stop offset="1" stopColor="#23304e"/></radialGradient></defs><circle cx="14" cy="14" r="14" fill="url(#sr)"/><path d="M2 20a14 14 0 0 1 4-15c3 4 4 10 2 17z" fill="#e23a8e"/><path d="M8 2a14 14 0 0 1 14 2c-4 2-8 2-14 0z" fill="#2a9a78"/><path d="M26 9a14 14 0 0 1-1 13c-4-2-5-6-4-10z" fill="#30a8c8"/><circle cx="14" cy="14" r="3.5" fill="#fff"/></svg></StatusSlot>
          <Clock>Fri Feb 16  8:49 AM</Clock>
        </StatusArea>
      </MenuBar>

      <Win>
        <TabStrip>
          <Lights><Light $c="#ff5f57"/><Light $c="#febc2e"/><Light $c="#28c840"/></Lights>
          {tabs.map(t => (
            <Tab key={t.t} $active={t.active} $sep={t.sep}>
              {t.f}
              <TabTitle $plain={t.plain}>{t.t}</TabTitle>
              <TabClose><X size={24} strokeWidth={2.4}/></TabClose>
            </Tab>
          ))}
          <NewTab><Plus size={34} strokeWidth={2.6}/></NewTab>
          <TabMenu><ChevronDown size={30} strokeWidth={2.2}/></TabMenu>
        </TabStrip>

        <Toolbar>
          <NavButtons>
            <NavBtn><ArrowLeft size={30} strokeWidth={2.5}/></NavBtn>
            <NavBtn $dim><ArrowRight size={30} strokeWidth={2.5}/></NavBtn>
            <NavBtn><RotateCw size={30} strokeWidth={2.5}/></NavBtn>
          </NavButtons>
          <Omnibox>
            <Lock size={22} fill="#5f6368" color="#5f6368"/>
            <Url><Host>canvas.ubc.ca</Host>/courses/133331/files/31187009?module_item_id=6582286</Url>
            <ActionRow>
              <ActionSlot><GoogleG/></ActionSlot>
              <ActionSlot><svg width="30" height="32" viewBox="0 0 30 32" fill="none" stroke="#5f6368" strokeWidth="2.4"><path d="M9 3H3v21h24V3h-6M15 1v15M9 11l6 6 6-6"/><path d="M8 28h14v3H8z" fill="#5f6368"/></svg></ActionSlot>
              <ActionSlot><ZoomOut size={31} strokeWidth={2}/></ActionSlot>
              <ActionSlot><Share size={30} strokeWidth={2}/></ActionSlot>
              <ActionSlot><Star size={31} strokeWidth={2}/></ActionSlot>
            </ActionRow>
          </Omnibox>
          <ActionRow $out>
            <ActionSlot><svg width="30" height="32" viewBox="0 0 30 32"><circle cx="15" cy="16" r="15" fill="#15846e"/><path d="M22 10a9 9 0 1 0 1 9h-8" fill="none" stroke="#fff" strokeWidth="4"/></svg></ActionSlot>
            <ActionSlot><svg width="32" height="32" viewBox="0 0 32 32"><circle cx="16" cy="16" r="15" fill="#f0923c"/><circle cx="16" cy="16" r="10" fill="#f7c68e"/><path d="M16 8l7 8-7 8-7-8z" fill="#2f8fd0"/></svg></ActionSlot>
            <ActionSlot><FaPuzzlePiece size={30} color="#202124"/></ActionSlot>
            <ActionSlot><svg width="30" height="28" viewBox="0 0 30 28"><rect x="2" y="2" width="26" height="24" fill="none" stroke="#202124" strokeWidth="4"/><rect x="16" y="2" width="12" height="24" fill="#202124"/></svg></ActionSlot>
            <Avatar>C</Avatar>
            <ActionSlot><svg width="8" height="28" viewBox="0 0 8 28" fill="#202124"><circle cx="4" cy="4" r="3"/><circle cx="4" cy="14" r="3"/><circle cx="4" cy="24" r="3"/></svg></ActionSlot>
          </ActionRow>
        </Toolbar>

        <Body>
          <Side>
            <LogoBox>
              <svg width="68" height="91" viewBox="0 0 68 91">
                <path d="M1 1h66v56c0 16-18 26-33 33C19 83 1 73 1 57z" fill="none" stroke="#fff" strokeWidth="2"/>
                <text x="34" y="25" textAnchor="middle" fill="#fff" fontFamily="Liberation Sans" fontWeight="700" fontSize="26" textLength="57" lengthAdjust="spacingAndGlyphs">UBC</text>
                <path d="M6 32c7-3 10 2 14 0s9-3 14 0 9 2 14 0 9-2 14 0M6 38c7-3 10 2 14 0s9-3 14 0 9 2 14 0 9-2 14 0" fill="none" stroke="#fff" strokeWidth="2.6"/>
                <path d="M6 44l16 6 3-10 6 12 3-14 3 14 6-12 3 10 16-6-12 17 8-2c-4 14-17 21-26 24C25 80 12 73 8 59l8 2z" fill="#fff"/>
              </svg>
            </LogoBox>
            <SideItem>
              <SideIcon $h={58} viewBox="0 0 60 58"><defs><clipPath id="av"><circle cx="30" cy="29" r="25"/></clipPath><linearGradient id="avg" x1="0" y1="0" x2="0" y2="1"><stop offset="0" stopColor="#a5a5a5"/><stop offset="1" stopColor="#8d8d8d"/></linearGradient></defs><g clipPath="url(#av)" fill="url(#avg)" stroke="none"><circle cx="30" cy="21" r="12"/><ellipse cx="30" cy="50" rx="25" ry="15"/></g><circle cx="30" cy="29" r="27" stroke="#fff" strokeWidth="3"/></SideIcon>
              <SideLabel>Account</SideLabel>
            </SideItem>
            <SideItem>
              <SideIcon viewBox="0 0 60 42"><path d="M17 34h-7v-3a20 20 0 0 1 40 0v3h-7M19 35h6M34 35h5"/><path d="M25 21l4 13c1 3 7 2 6-2z"/><path d="M30 12v3M17 17l2 2M43 17l-2 2"/></SideIcon>
              <SideLabel>Dashboard</SideLabel>
            </SideItem>
            <SideItem $on>
              <SideIcon viewBox="0 0 60 42"><path d="M47 32H18a4 4 0 0 0 0 8h29M14 36V3a2 2 0 0 1 2-2h31v31M47 36H19"/><rect x="21" y="8" width="19" height="7"/><path d="M21 20h19"/></SideIcon>
              <SideLabel>Courses</SideLabel>
            </SideItem>
            <SideItem>
              <SideIcon viewBox="0 0 60 42"><path d="M9 37v-3c0-4 9-5 12-7v-2c-3-2-5-6-5-10a9 9 0 0 1 18 0c0 4-2 8-5 10v2c3 2 12 3 12 7v3zM36 24l5-2v-2c-2-2-3-4-3-7a7 7 0 0 1 14 0c0 3-1 5-3 7v2c3 1 6 2 6 5v5H42"/></SideIcon>
              <SideLabel>Groups</SideLabel>
            </SideItem>
            <SideItem>
              <SideIcon viewBox="0 0 60 42"><rect x="13" y="5" width="34" height="36" rx="2"/><path d="M13 13h34M22 1v8M38 1v8"/><rect x="19" y="19" width="5" height="5"/><rect x="27.5" y="19" width="5" height="5"/><rect x="36" y="19" width="5" height="5"/><rect x="19" y="29" width="5" height="5"/><rect x="27.5" y="29" width="5" height="5"/><rect x="36" y="29" width="5" height="5"/></SideIcon>
              <SideLabel>Calendar</SideLabel>
            </SideItem>
            <SideItem>
              <SideIcon viewBox="0 0 60 42"><path d="M16 20H10v18a2 2 0 0 0 2 2h36a2 2 0 0 0 2-2V20h-6M10 30h40M17 30V5h26v25M24 20h12"/></SideIcon>
              <SideLabel>Inbox</SideLabel>
              <InboxBadge>148</InboxBadge>
            </SideItem>
            <SideItem>
              <SideIcon viewBox="0 0 60 42"><circle cx="30" cy="21" r="20"/><path d="M30 8v14l11 8"/></SideIcon>
              <SideLabel>History</SideLabel>
            </SideItem>
            <SideItem>
              <SideIcon viewBox="0 0 60 42"><circle cx="30" cy="21" r="19"/><path d="M24 15c0-4 3-6 6-6s7 2 7 6c0 6-7 6-7 12"/><circle cx="30" cy="32" r="1.5" fill="#fff"/></SideIcon>
              <SideLabel>Help</SideLabel>
            </SideItem>
            <Collapse viewBox="0 0 40 30"><path d="M1 0v30M39 15H8M18 5L8 15l10 10"/></Collapse>
          </Side>

          <Main>
            <Crumbs>
              <Burger/>
              <span>COSC 310 101 2023W2</span>
              <CrumbSep><ChevronRight size={22} strokeWidth={1.8}/></CrumbSep>
              <span>Files</span>
              <CrumbSep><ChevronRight size={22} strokeWidth={1.8}/></CrumbSep>
              <CrumbNow>W3_Requirements.pdf</CrumbNow>
            </Crumbs>
            <Columns>
              <CourseNav>
                <Term>2023W2</Term>
                {links.map(l => (
                  <NavRow key={l}>{l}{l === "Grades" && <NavBadge>2</NavBadge>}</NavRow>
                ))}
              </CourseNav>
              <Content>
                <Title>W3_Requirements.pdf</Title>
                <DownloadRow>Download W3_Requirements.pdf <Size>(2.24 MB)</Size></DownloadRow>
                <PdfBar>
                  <PdfText>Page</PdfText>
                  <PdfBtn $dim $ml={23}><ChevronLeft size={34} strokeWidth={1.8}/></PdfBtn>
                  <PdfInput>1</PdfInput>
                  <PdfBtn $ml={18}><ChevronRight size={34} strokeWidth={1.8}/></PdfBtn>
                  <PdfText $ml={25}>of 51</PdfText>
                  <PdfSep $ml={28}/>
                  <PdfBtn $ml={36}><svg width="32" height="32" viewBox="0 0 32 32" fill="none" stroke="#fff" strokeWidth="2.6"><path d="M10 6a13 13 0 1 1-6 7"/><path d="M3 3l7 3-1 7" strokeWidth="2.4"/></svg></PdfBtn>
                  <PdfSep $ml={38}/>
                  <PdfBtn $on $ml={7}><Minus size={30} strokeWidth={2.4}/></PdfBtn>
                  <PdfText $small $ml={6}>ZOOM</PdfText>
                  <PdfBtn $ml={27}><Plus size={30} strokeWidth={2.2}/></PdfBtn>
                  <PdfSep $ml={39}/>
                  <PdfBtn $ml={29}><svg width="32" height="32" viewBox="0 0 32 32" fill="none" stroke="#fff" strokeWidth="3"><path d="M4 28L28 4M18 3h11v11M3 18v11h11"/></svg></PdfBtn>
                  <PdfSep $ml={36}/>
                </PdfBar>
                <Viewer>
                  <Slide>
                    <SlideBox><span>COSC 310:</span><span>REQUIREMENTS AND USER STORIES</span></SlideBox>
                    <Byline>Dr. Gema Rodriguez-Perez<br/>University of British Columbia</Byline>
                  </Slide>
                  <Grip viewBox="0 0 20 20"><path d="M3 19L19 3M10 19l9-9"/></Grip>
                </Viewer>
                <Pager>
                  <PagerBtn><Caret/>Previous</PagerBtn>
                  <PagerBtn $next><span>Next</span><Caret $r/></PagerBtn>
                </Pager>
              </Content>
            </Columns>
          </Main>
        </Body>
      </Win>

      <Dock>
        {dockItems.map((d, i) => d === "rule" ? <DockRule key={i}/> : (
          <Slot key={d.k}>
            <DockArt viewBox="0 0 60 61">{art[d.k]}</DockArt>
            {d.n && <DockBadge $wide={d.n.length > 1}>{d.n}</DockBadge>}
            {d.dot && <RunDot/>}
          </Slot>
        ))}
      </Dock>
    </Page>
  );
}
